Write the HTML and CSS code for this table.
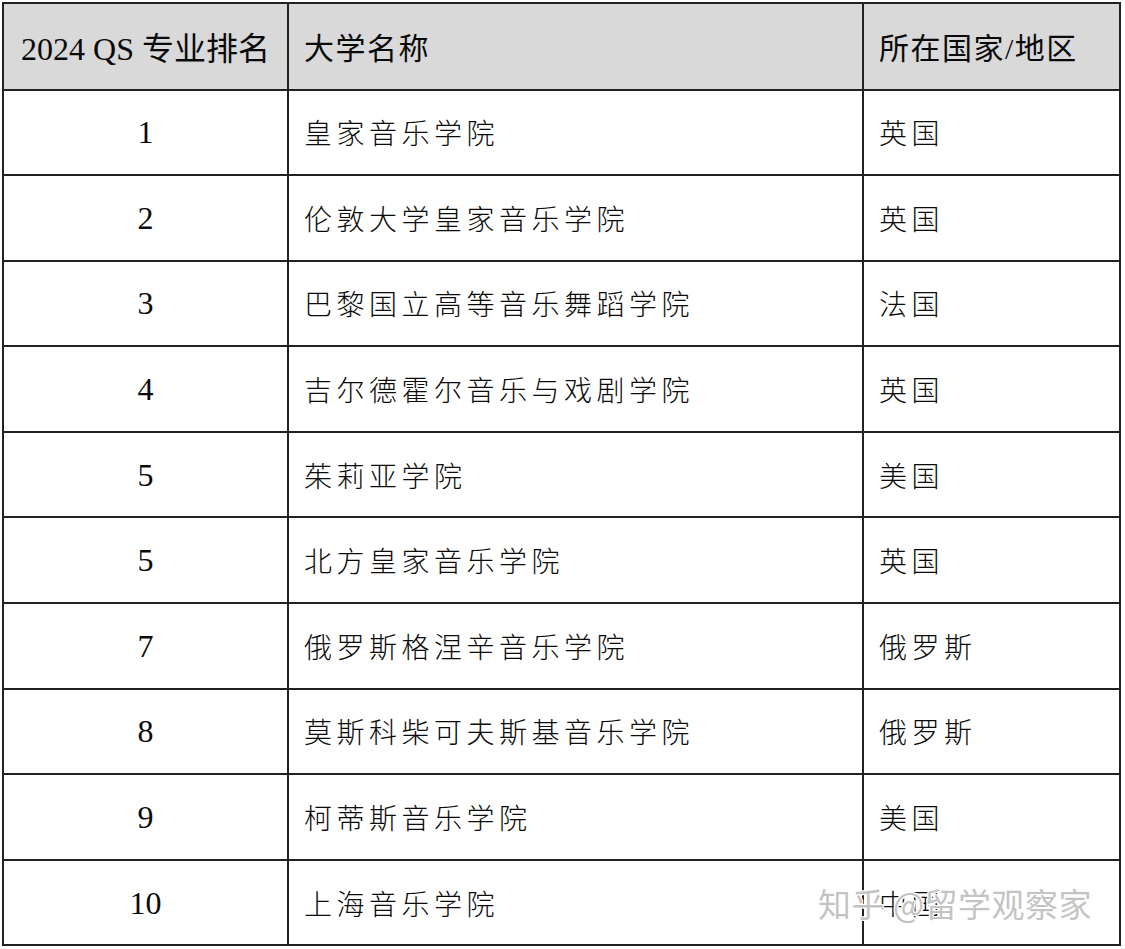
FILE: index.html
```html
<!DOCTYPE html>
<html lang="zh-CN">
<head>
<meta charset="utf-8">
<title>2024 QS 专业排名</title>
<link rel="stylesheet" href="styles.css">
</head>
<body>
<div class="page">
  <table class="rank">
    <thead>
      <tr>
        <th class="c-rank">2024 QS 专业排名</th>
        <th class="c-name">大学名称</th>
        <th class="c-country">所在国家/地区</th>
      </tr>
    </thead>
    <tbody>
      <tr><td class="c-rank">1</td><td class="c-name">皇家音乐学院</td><td class="c-country">英国</td></tr>
      <tr><td class="c-rank">2</td><td class="c-name">伦敦大学皇家音乐学院</td><td class="c-country">英国</td></tr>
      <tr><td class="c-rank">3</td><td class="c-name">巴黎国立高等音乐舞蹈学院</td><td class="c-country">法国</td></tr>
      <tr><td class="c-rank">4</td><td class="c-name">吉尔德霍尔音乐与戏剧学院</td><td class="c-country">英国</td></tr>
      <tr><td class="c-rank">5</td><td class="c-name">茱莉亚学院</td><td class="c-country">美国</td></tr>
      <tr><td class="c-rank">5</td><td class="c-name">北方皇家音乐学院</td><td class="c-country">英国</td></tr>
      <tr><td class="c-rank">7</td><td class="c-name">俄罗斯格涅辛音乐学院</td><td class="c-country">俄罗斯</td></tr>
      <tr><td class="c-rank">8</td><td class="c-name">莫斯科柴可夫斯基音乐学院</td><td class="c-country">俄罗斯</td></tr>
      <tr><td class="c-rank">9</td><td class="c-name">柯蒂斯音乐学院</td><td class="c-country">美国</td></tr>
      <tr><td class="c-rank">10</td><td class="c-name">上海音乐学院</td><td class="c-country">中国</td></tr>
    </tbody>
  </table>
  <div class="watermark">知乎 @留学观察家</div>
</div>
</body>
</html>
```

FILE: styles.css
```css
html, body {
  margin: 0;
  padding: 0;
  background: #ffffff;
}

.page {
  position: relative;
  width: 1125px;
  height: 949px;
  padding: 2px 0 0 2px;
  box-sizing: border-box;
  overflow: hidden;
}

.rank {
  border-collapse: collapse;
  table-layout: fixed;
  width: 1119px;
  font-family: "Liberation Serif", "Noto Sans CJK SC", serif;
  color: #0a0a0a;
}

.rank th,
.rank td {
  border: 2px solid #222222;
  padding: 0;
  vertical-align: middle;
  text-align: left;
  font-weight: 400;
}

.rank th {
  background: #d9d9d9;
  height: 84.5px;
  font-size: 32px;
}

.rank td {
  height: 82.6px;
  font-size: 32px;
}

.rank .c-rank {
  width: 283px;
  text-align: center;
}

.rank td.c-rank {
  padding-top: 1px;
}

.rank .c-name {
  width: 558px;
  padding-left: 15px;
}

.rank .c-country {
  padding-left: 15px;
}

.rank td.c-name,
.rank td.c-country {
  font-size: 28px;
  letter-spacing: 4.5px;
  font-weight: 300;
}

.rank th.c-name,
.rank th.c-country {
  font-size: 30px;
  letter-spacing: 1.5px;
}

.watermark {
  position: absolute;
  left: 818px;
  top: 883px;
  font-family: "Noto Sans CJK SC", sans-serif;
  font-size: 33px;
  line-height: 40px;
  color: rgba(185, 185, 185, 0.85);
  letter-spacing: 0.5px;
  text-shadow: 0 0 1px #ffffff, 1px 1px 0 #ffffff, -1px -1px 0 #ffffff, 1px -1px 0 #ffffff, -1px 1px 0 #ffffff;
  white-space: nowrap;
}
```
